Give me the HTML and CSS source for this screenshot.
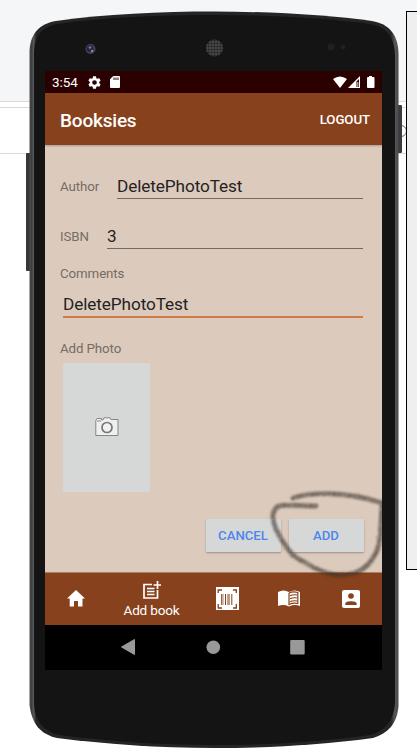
FILE: index.html
```
<!DOCTYPE html>
<html lang="en">
<head>
<meta charset="utf-8">
<title>Booksies</title>
<link rel="stylesheet" href="styles.css">
</head>
<body>
<div class="stage">
  <div class="backdrop"><div class="band-top"></div><div class="band-gap"></div><div class="band-row"></div></div>
  <div class="side-panel"></div>
  <svg class="phone-shell" width="417" height="748" viewBox="0 0 417 748">
    <defs>
      <linearGradient id="rim"><stop offset="0" stop-color="#4c4d4f"/><stop offset=".006" stop-color="#3c3d3f"/><stop offset=".011" stop-color="#58595b"/><stop offset=".018" stop-color="#252525"/><stop offset=".98" stop-color="#252525"/><stop offset=".99" stop-color="#58585a"/><stop offset="1" stop-color="#48484a"/></linearGradient>
      <pattern id="mesh" width="3" height="3" patternUnits="userSpaceOnUse"><rect width="3" height="3" fill="#484848"/><circle cx="1.5" cy="1.5" r="1.1" fill="#202020"/></pattern>
    </defs>
    <circle cx="401" cy="131" r="5.5" fill="none" stroke="#666" stroke-width="1"/>
    <rect x="26" y="153" width="5" height="118" rx="1" fill="#363638"/>
    <rect x="397" y="105" width="5" height="48" rx="1" fill="#3c3c40"/>
    <path d="M29.500 50C31 32 40 24 56 21C105 14 160 11.500 214 11.500C270 11.500 330 15 372 21C389 24 398 34 398.500 54V706C397 724 388 733 373 738C320 745 270 748 214 748C158 748 105 744 57 738C40 734 32 724 29.500 705Z" fill="url(#rim)"/>
    <path d="M34 52C35 35 42 27 58 24C106 17 160 15 214 15C270 15 327 18 370 24C386 27 394 36 395 55V704C393 721 385 731 370 735C320 742 270 745 214 745C158 745 106 741 59 735C43 731 35 721 34 704Z" fill="#141414"/>
    <circle cx="90.500" cy="49" r="5" fill="#46474a"/><circle cx="90" cy="48.500" r="3.500" fill="#242447"/><circle cx="90" cy="47.500" r="1.300" fill="#777bc0"/><circle cx="92" cy="51" r="1" fill="#aaa"/>
    <circle cx="214.500" cy="48" r="8.500" fill="url(#mesh)"/>
    <circle cx="331" cy="47" r="3.500" fill="#202020"/><circle cx="343" cy="47" r="2.500" fill="#202020"/>
  </svg>
  <main class="screen">
    <header class="status">
      <span class="clock">3:54</span>
      <svg class="gear" width="14" height="14" viewBox="2 2 20 20"><path fill="#fff" d="M19.140 12.940c.04-.3.06-.61.06-.94s-.02-.64-.07-.94l2.030-1.580c.18-.14.23-.41.12-.61l-1.920-3.320c-.12-.22-.37-.29-.59-.22l-2.390.96c-.5-.38-1.030-.7-1.620-.94L14.400 2.810c-.04-.24-.24-.41-.48-.41h-3.840c-.24 0-.43.17-.47.41l-.36 2.540c-.59.24-1.130.57-1.620.94l-2.390-.96c-.22-.08-.47 0-.59.22L2.740 8.870c-.12.21-.08.47.12.61l2.030 1.580c-.05.3-.09.63-.09.94s.02.64.07.94l-2.030 1.580c-.18.14-.23.41-.12.61l1.920 3.320c.12.22.37.29.59.22l2.390-.96c.5.38 1.030.7 1.620.94l.36 2.540c.05.24.24.41.48.41h3.840c.24 0 .44-.17.47-.41l.36-2.540c.59-.24 1.130-.56 1.620-.94l2.390.96c.22.08.47 0 .59-.22l1.920-3.320c.12-.22.07-.47-.12-.61zM12 15.600a3.600 3.600 0 1 1 0-7.200 3.600 3.600 0 0 1 0 7.200z"/></svg>
      <svg class="card" width="10" height="12" viewBox="0 0 10 12"><path fill="#fff" d="M3.300 0H9Q10 0 10 1V11Q10 12 9 12H1Q0 12 0 11V3.300Z"/><path stroke="#2b0000" d="M4 1.500V4M6 1.500V4M8 1.500V4"/></svg>
      <svg class="signals" width="42" height="13" viewBox="0 0 42 13"><path fill="#fff" d="M0 3Q7-2.200 14 3L7 12Z"/><path fill="#fff" d="M27 0V12H15Z"/><path fill="#2b0000" d="M23.500 5.500L26 3V11H23.500Z"/><path fill="#fff" d="M24.400 6H25.300V11H24.400ZM36 0H39V1H40.500Q41.500 1 41.500 2V11Q41.500 12 40.500 12H35Q34 12 34 11V2Q34 1 35 1H36Z"/></svg>
    </header>
    <div class="appbar"><h1>Booksies</h1><span class="logout">LOGOUT</span></div>
    <form class="content">
      <div class="row author"><label>Author</label><div class="field">DeletePhotoTest</div></div>
      <div class="row isbn"><label>ISBN</label><div class="field">3</div></div>
      <label class="comments-label">Comments</label>
      <div class="field comments">DeletePhotoTest</div>
      <label class="photo-label">Add Photo</label>
      <div class="photo"><svg width="24" height="20" viewBox="0 0 24 20"><path d="M.8 3.500L2 1.500H6.500V3H8L9 .8H15L16 2.500H23V18.500H.8Z" fill="#efefef" stroke="#858585"/><path d="M2 4H6" stroke="#858585"/><circle cx="12" cy="10.500" r="5" fill="#f1f1f1" stroke="#777" stroke-width="1.700"/></svg></div>
      <div class="actions"><div class="button">CANCEL</div><div class="button">ADD</div></div>
    </form>
    <nav class="tabs">
      <div class="tab"><svg width="18" height="17" viewBox="0 0 18 17"><path fill="#fff" d="M9 0L18 8.500H15.500V16.500H11V11H7V16.500H2.700V8.500H0Z"/></svg></div>
      <div class="tab selected"><svg width="18" height="18" viewBox="0 0 18 18"><path fill="none" stroke="#fff" stroke-width="1.700" d="M9 3.500H1V17H14.500V9M14.500 0V8M10.500 4H18.500M4 7.500H11.500M4 10.500H11.500M4 13.500H11.500"/></svg><span>Add book</span></div>
      <div class="tab"><svg width="23" height="23" viewBox="0 0 23 23"><path fill="#fff" d="M0 0H23V23H0Z"/><path fill="none" stroke="#87411c" stroke-width="1.300" d="M2.200 6V3H6M17 3H20.300V6M2.200 17V21H6M17 21H20.300V17"/><path stroke="#87411c" stroke-width="1" d="M5.700 7V18M9.500 7V18M12 7V18M15.800 7V18"/><path stroke="#b18468" stroke-width="1" d="M7 7V18M13.300 7V18"/></svg></div>
      <div class="tab"><svg width="22" height="17" viewBox="0 0 22 17"><path fill="#fff" d="M0 2Q5.500-1 11 2Q16.500-1 22 2V16Q16.500 14 11 16.500Q5.500 14 0 16Z"/><path fill="none" stroke="#87411c" stroke-width="1.200" d="M11 3V14.500Q15 12.500 19.800 13.500V2.500Q15 1 11 3M12 5.700Q15 4.300 19 5M12 8.700Q15 7.300 19 8M12 11.700Q15 10.300 19 11"/></svg></div>
      <div class="tab"><svg width="18" height="18" viewBox="0 0 18 18"><rect width="18" height="18" rx="2" fill="#fff"/><circle cx="9" cy="6" r="2.800" fill="#87411c"/><path fill="#87411c" d="M3.300 15V13.500C3.300 10.500 14.700 10.500 14.700 13.500V15Z"/></svg></div>
    </nav>
    <footer class="system">
      <svg width="337" height="45" viewBox="0 0 337 45"><path fill="#999" d="M76.500 22L89.500 14.500V29.500Z" stroke="#999" stroke-linejoin="round"/><circle cx="168.300" cy="22.300" r="6.800" fill="#999"/><rect x="245.200" y="15" width="14.500" height="14.500" rx="1" fill="#999"/></svg>
    </footer>
  </main>
  <svg class="scribble" width="417" height="748" viewBox="0 0 417 748">
    <defs><filter id="pencil" x="-10%" y="-10%" width="120%" height="120%"><feTurbulence type="fractalNoise" baseFrequency=".55" numOctaves="2" result="n"/><feDisplacementMap in="SourceGraphic" in2="n" scale="2" xChannelSelector="R" yChannelSelector="G" result="d"/><feColorMatrix in="n" values="0 0 0 0 0  0 0 0 0 0  0 0 0 0 0  1.500 0 0 0 .05" result="m"/><feComposite in="d" in2="m" operator="in"/><feGaussianBlur stdDeviation=".8"/></filter><clipPath id="glass"><rect x="45" y="71" width="337" height="599"/></clipPath></defs>
    <g clip-path="url(#glass)"><path filter="url(#pencil)" d="M316 506C301 506 287 504 279 506C269 511 273 524 279 535C286 547 291 556 304 562C321 573 337 577 350 574C369 571 379 552 380 537C381 524 382 511 382 503C370 499 351 495 335 494C318 493 303 495 293 498" fill="none" stroke="#3d342c" stroke-opacity=".75" stroke-width="4.800" stroke-linecap="round"/></g>
  </svg>
</div>
</body>
</html>
```
FILE: styles.css
```
* { box-sizing: border-box; }
body { margin: 0; background: #fff; font-family: Roboto, sans-serif; overflow: hidden; }
svg { display: block; flex-shrink: 0; }
.stage { position: relative; width: 417px; height: 748px; padding: 71px 35px 78px 45px; }
.backdrop, .phone-shell, .scribble { position: absolute; top: 0; left: 0; }
.backdrop { width: 417px; }
.band-top { height: 102px; background: #f5f6f8; border-bottom: 1px solid #dadada; }
.band-gap { height: 6px; border-bottom: 1px solid #dadada; }
.band-row { height: 46px; border-bottom: 1px solid #dadada; }
.side-panel { position: absolute; left: 406px; top: 11px; width: 20px; height: 559px; border: 1px solid #000; background: #efefef; z-index: 1; }
.scribble { z-index: 3; pointer-events: none; }
.screen { position: relative; width: 337px; height: 599px; background: #dccbbd; z-index: 2; }
.status { height: 22px; display: flex; align-items: center; background: #2b0000; color: #fff; padding-left: 7px; }
.clock { font-size: 13.500px; letter-spacing: -.1px; width: 36px; }
.gear { width: 13px; height: 13px; }
.card { margin-left: 9px; }
.signals { margin-left: auto; margin-right: 7px; }
.appbar { height: 52px; display: flex; align-items: center; justify-content: space-between; padding: 2px 12px 0 15px; background: #87411c; color: #fff; box-shadow: 0 1px 2px rgba(0,0,0,.25); }
h1 { margin: 0; font-size: 19px; font-weight: 500; letter-spacing: -.2px; }
.logout { font-size: 13.300px; font-weight: 500; letter-spacing: -.1px; padding-bottom: 1px; }
.content { height: 428px; display: flex; flex-direction: column; padding: 28px 18px 0 15px; border-bottom: 1px solid #ae7f66; }
.row { display: flex; height: 26px; }
.isbn { margin-top: 24px; }
label { color: #756b65; font-size: 13.300px; line-height: 16px; letter-spacing: -.1px; }
.row label { padding-top: 6px; }
.field { color: #25221f; font-size: 17.200px; letter-spacing: -.1px; line-height: 26px; height: 26px; border-bottom: 1px solid #706966; }
.row .field { margin-left: auto; margin-right: 1px; width: 246px; }
.isbn .field { width: 256px; }
.comments-label { margin-top: 17px; }
.comments { margin: 8px 1px 0 3px; height: 28px; line-height: 28px; border-bottom: 2px solid #d07c46; }
.photo-label { margin-top: 23px; }
.photo { width: 87px; height: 129px; margin: 6px 0 0 3px; padding-bottom: 1px; display: flex; align-items: center; justify-content: center; background: #d6d8d7; border-radius: 1px; }
.actions { display: flex; gap: 8px; margin: 27px 0 0 145.500px; }
.button { width: 75px; height: 33px; background: #d6d8d7; color: #4c86ee; font-size: 13.200px; line-height: 34px; font-weight: 500; text-align: center; border-radius: 1px; box-shadow: 0 1px 2px rgba(0,0,0,.3); }
.tabs { height: 52px; padding-bottom: 1px; display: grid; grid-template-columns: 61px 91px 61px 62px 62px; background: #87411c; }
.tab { display: flex; align-items: center; justify-content: center; color: #fff; }
.selected { flex-direction: column; gap: 3px; font-size: 13.600px; letter-spacing: -.2px; line-height: 17px; padding-top: 3px; }
.system { height: 45px; background: #000; }
```
